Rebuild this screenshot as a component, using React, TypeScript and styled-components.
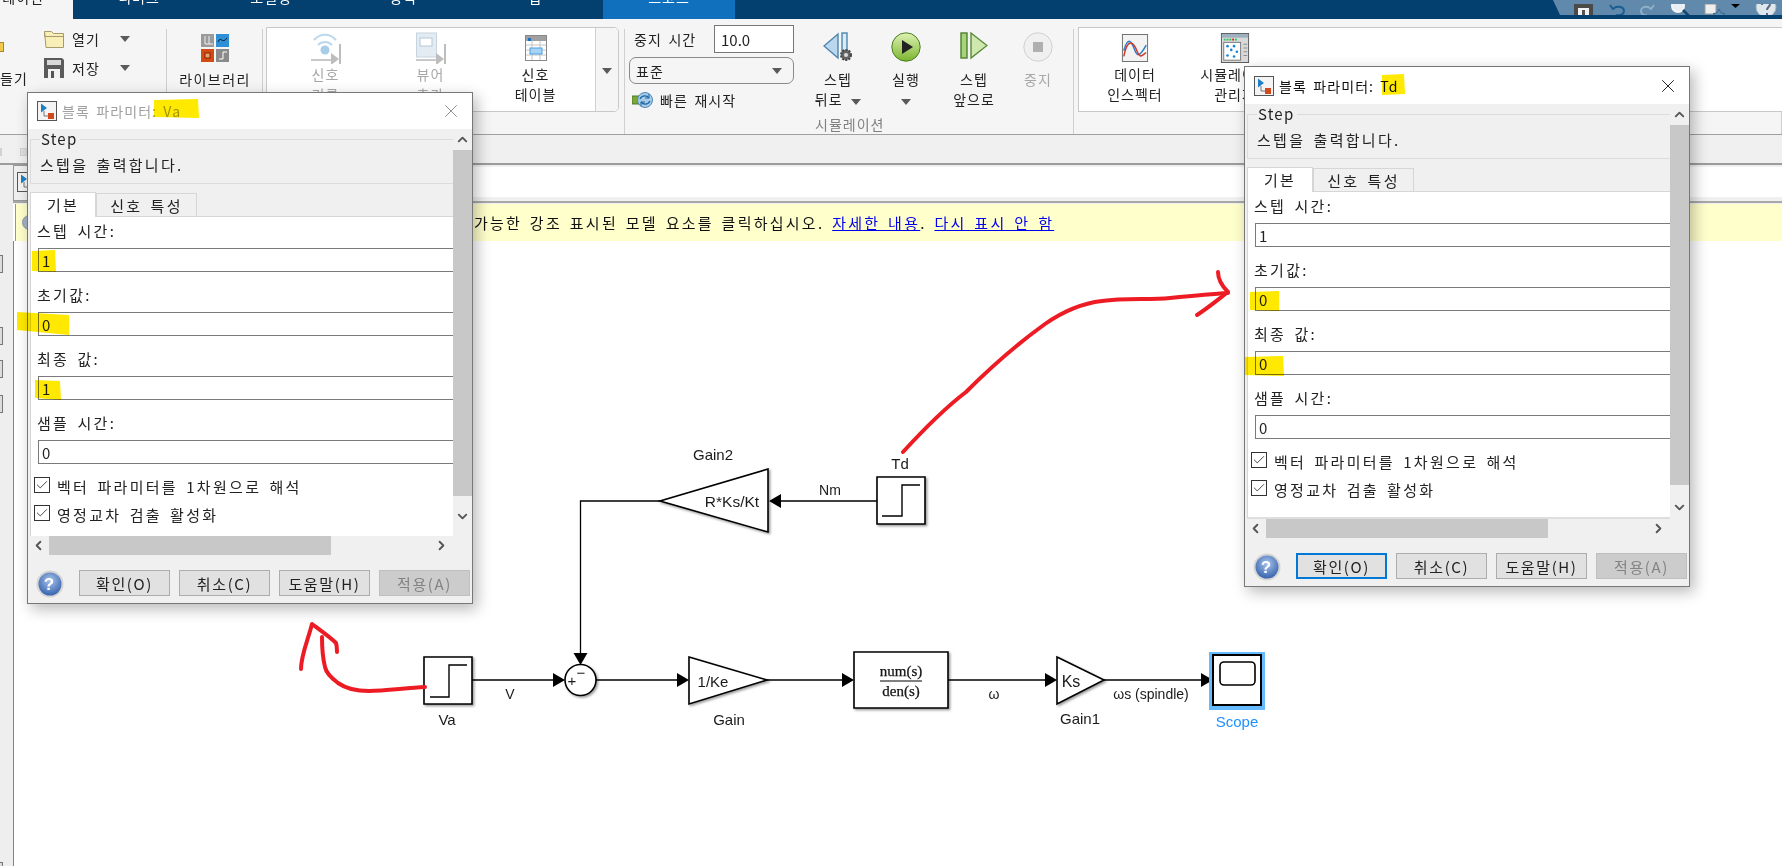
import React from "react";
import styled, { createGlobalStyle } from "styled-components";
import { ChevronUp, ChevronDown, ChevronLeft, ChevronRight, Check, X } from "lucide-react";

const Global = createGlobalStyle`
  html, body { margin: 0; padding: 0; background: #fff; }
  body { font-family: "Noto Sans CJK KR", "Noto Sans", sans-serif; color: #222; overflow: hidden; }
  * { box-sizing: border-box; }
`;

const Page = styled.div`
  position: relative;
  width: 1782px;
  height: 866px;
  overflow: hidden;
  display: flex;
  flex-direction: column;
`;

/* ---------- tab bar ---------- */
const TabBar = styled.div`
  height: 19px;
  flex: none;
  display: flex;
  background: #03406f;
  overflow: hidden;
`;
const Tab = styled.div<{ $w: number; $kind?: "home" | "active" }>`
  width: ${(p) => p.$w}px;
  height: 19px;
  text-align: ${(p) => (p.$kind === "home" ? "right" : "center")};
  padding-right: ${(p) => (p.$kind === "home" ? 29 : 0)}px;
  font-size: 14px;
  letter-spacing: 1px;
  line-height: 14px;
  color: ${(p) => (p.$kind === "home" ? "#222" : "#fff")};
  background: ${(p) => (p.$kind === "home" ? "#f5f5f5" : p.$kind === "active" ? "#1070bd" : "transparent")};
  white-space: nowrap;
  overflow: hidden;
  & > span { display: block; margin-top: -10px; }
`;
const TabGap = styled.div`
  width: 2px;
`;
const QuickBar = styled.div`
  margin-left: auto;
  width: 229px;
  height: 15px;
  background: #6189ab;
  clip-path: polygon(0 0, 100% 0, 100% 100%, 7px 100%);
`;

/* ---------- ribbon ---------- */
const Ribbon = styled.div`
  height: 116px;
  flex: none;
  display: flex;
  background: #f5f5f5;
  border-bottom: 1px solid #a0a0a0;
`;
const Section = styled.div<{ $w?: number }>`
  ${(p) => (p.$w ? `width: ${p.$w}px; flex: none;` : "flex: 1; min-width: 0;")}
  display: flex;
  background: linear-gradient(#cfcfcf, #cfcfcf) no-repeat right 0 top 10px / 1px 100%;
  font-size: 14px;
  letter-spacing: 1px;
  word-spacing: 2.5px;
`;
const NewCol = styled.div`
  width: 44px;
  flex: none;
  line-height: 20px;
`;
const NewIcon = styled.div`
  width: 4px;
  height: 10px;
  margin-top: 23px;
  background: #f2c94c;
  border: 1px solid #a8862a;
  border-left: 0;
`;
const NewLabel = styled.div`
  margin-top: 16px;
`;
const FileCol = styled.div`
  padding-top: 5px;
`;
const FileRow = styled.div<{ $top?: number }>`
  height: 29px;
  margin-top: ${(p) => p.$top ?? 0}px;
  display: flex;
  align-items: center;
`;
const FileLabel = styled.span`
  width: 48px;
  margin-left: 8px;
`;
const Caret = styled.span<{ $left?: number }>`
  display: inline-block;
  width: 0;
  height: 0;
  margin-left: ${(p) => p.$left ?? 0}px;
  border-left: 5px solid transparent;
  border-right: 5px solid transparent;
  border-top: 6px solid #5a5a5a;
`;
const LibraryButton = styled.div`
  width: 96px;
  display: flex;
  flex-direction: column;
  align-items: center;
  padding-top: 13px;
  line-height: 19px;
`;
const IconSlot = styled.div`
  height: 32px;
  display: flex;
  align-items: center;
  justify-content: center;
`;
const LibraryLabel = styled.div`
  margin-top: 6px;
  letter-spacing: 1.4px;
  white-space: nowrap;
`;
const Panel = styled.div<{ $w?: number; $left: number; $pad: number; $radius?: boolean }>`
  margin: 8px 0 0 ${(p) => p.$left}px;
  height: 85px;
  ${(p) => (p.$w ? `width: ${p.$w}px;` : "flex: 1;")}
  display: flex;
  background: #fff;
  padding-left: ${(p) => p.$pad}px;
  border: 1px solid #c8c8c8;
  ${(p) => (p.$radius ? "border-radius: 0 5px 5px 0;" : "border-right: 0;")}
  overflow: hidden;
`;
const BigButton = styled.div<{ $w: number; $off?: boolean }>`
  width: ${(p) => p.$w}px;
  flex: none;
  padding-top: 4px;
  text-align: center;
  line-height: 20px;
  color: ${(p) => (p.$off ? "#a8a8a8" : "#222")};
  white-space: nowrap;
`;
const PanelMenu = styled.div`
  width: 24px;
  margin-left: 7px;
  border-left: 1px solid #d0d0d0;
  display: flex;
  align-items: center;
  justify-content: center;
  background: #f5f5f5;
  padding-top: 2px;
`;
const StopCol = styled.div`
  width: 165px;
  margin-left: 4px;
  padding-top: 6px;
  flex: none;
`;
const StopRow = styled.div`
  height: 28px;
  display: flex;
  align-items: center;
`;
const StopLabel = styled.span`
  width: 80px;
  margin-left: 5px;
  white-space: nowrap;
`;
const StopInput = styled.div`
  width: 80px;
  height: 28px;
  border: 1px solid #777;
  background: #fff;
  padding-left: 6px;
  font-size: 15px;
  line-height: 28px;
  letter-spacing: 0;
`;
const ModeSelect = styled.div`
  height: 27px;
  margin-top: 4px;
  border: 1px solid #8a8a8a;
  border-radius: 7px;
  display: flex;
  align-items: center;
  justify-content: space-between;
  padding: 0 11px 0 6px;
`;
const RestartRow = styled.div`
  margin-top: 8px;
  height: 16px;
  display: flex;
  align-items: center;
  gap: 6px;
  padding-left: 3px;
  white-space: nowrap;
`;
const SimGroup = styled.div`
  margin-left: 10px;
  width: 268px;
`;
const SimButtons = styled.div`
  display: flex;
  height: 95px;
`;
const SimButton = styled.div<{ $off?: boolean; $w: number }>`
  width: ${(p) => p.$w}px;
  padding-top: 13px;
  text-align: center;
  line-height: 20px;
  color: ${(p) => (p.$off ? "#a8a8a8" : "#222")};
  white-space: nowrap;
`;
const SimIconSlot = styled.div`
  height: 37px;
  display: flex;
  justify-content: center;
  align-items: flex-start;
`;
const SimCaption = styled.div`
  margin-left: 11px;
  height: 20px;
  line-height: 20px;
  color: #808080;
`;

/* ---------- toolbar & address ---------- */
const Toolbar = styled.div`
  height: 30px;
  flex: none;
  background: #f0f0f0;
  border-bottom: 2px solid #9c9c9c;
  display: flex;
  gap: 18px;
  padding-top: 13px;
`;
const ToolStub = styled.div<{ $w: number }>`
  width: ${(p) => p.$w}px;
  height: 8px;
  background: #dedede;
  border: 1px solid #d2d2d2;
`;
const Lower = styled.div`
  flex: 1;
  display: flex;
  min-height: 0;
`;
const Sidebar = styled.div`
  width: 13px;
  flex: none;
  background: #eeeeee;
  display: flex;
  flex-direction: column;
`;
const SideTool = styled.div<{ $gap: number }>`
  width: 3px;
  height: 18px;
  flex: none;
  margin-top: ${(p) => p.$gap}px;
  background: #dcdcdc;
  border: 1px solid #777;
  border-left: 0;
`;
const Workspace = styled.div`
  flex: 1;
  display: flex;
  flex-direction: column;
  min-width: 0;
`;
const AddressRow = styled.div`
  height: 36px;
  flex: none;
  display: flex;
  background: #f0f0f0;
  padding-bottom: 4px;
`;
const AddressFrame = styled.div`
  width: 15px;
  border: 1px solid #999;
  border-right: 0;
  padding: 6px 0 0 3px;
  margin-bottom: -4px;
  background: #f0f0f0;
`;
const AddressField = styled.div`
  flex: 1;
  margin-top: 2px;
  background: #fff;
`;
const Rule = styled.div`
  height: 3px;
  flex: none;
  background: #f0f0f0;
  border-top: 2px solid #a8a8a8;
`;
const InfoBar = styled.div`
  height: 37px;
  flex: none;
  margin-left: 2px;
  background: #ffffcc;
  border-left: 1px solid #9a9a80;
  display: flex;
  align-items: center;
  padding-left: 6px;
  font-size: 15px;
  letter-spacing: 2.25px;
  word-spacing: 2.2px;
  white-space: nowrap;
  color: #111;
`;
const InfoDot = styled.span`
  width: 15px;
  height: 15px;
  border-radius: 50%;
  background: #a6b3c2;
  border: 1px solid #8a97a8;
  flex: none;
`;
const InfoText = styled.span`
  margin-left: 397px;
`;
const InfoLink = styled.a`
  color: #0000ee;
  text-decoration: underline;
`;
const Canvas = styled.div`
  flex: 1;
  min-height: 0;
  background: #fff;
  border-left: 1px solid #85828c;
`;
const DiagramSvg = styled.svg`
  display: block;
`;
const Shape = styled.path`
  fill: #fff;
  stroke: #000;
  stroke-width: 1.6;
`;
const Wire = styled.path`
  fill: none;
  stroke: #000;
  stroke-width: 1.3;
`;
const Glyph = styled.path`
  fill: none;
  stroke: #000;
  stroke-width: 1.4;
`;
const Head = styled.path`
  fill: #000;
`;
const Label = styled.text<{ $size?: number; $color?: string; $serif?: boolean }>`
  font-family: ${(p) => (p.$serif ? '"Liberation Serif", serif' : '"Liberation Sans", Arial, sans-serif')};
  font-size: ${(p) => p.$size ?? 15}px;
  fill: ${(p) => p.$color ?? "#1a1a1a"};
  text-anchor: middle;
  dominant-baseline: central;
  ${(p) => (p.$serif ? "stroke: #000; stroke-width: .25;" : "")}
`;

/* ---------- dialog ---------- */
const Window = styled.div<{ $left: number; $top: number; $h: number }>`
  position: absolute;
  left: ${(p) => p.$left}px;
  top: ${(p) => p.$top}px;
  width: 446px;
  height: ${(p) => p.$h}px;
  display: flex;
  flex-direction: column;
  background: #f0f0f0;
  border: 1px solid #777;
  box-shadow: 4px 5px 14px rgba(0, 0, 0, 0.28);
  font-size: 15px;
  letter-spacing: 2.3px;
  word-spacing: 2.6px;
`;
const TitleBar = styled.div<{ $h: number; $active: boolean }>`
  height: ${(p) => p.$h}px;
  flex: none;
  background: #fff;
  display: flex;
  align-items: center;
  padding: 0 10px 0 9px;
  font-size: 14px;
  letter-spacing: 1.1px;
  word-spacing: 2px;
  color: ${(p) => (p.$active ? "#111" : "#a0a0a0")};
`;
const TitleText = styled.span`
  margin-left: 5px;
  flex: 1;
`;
const Main = styled.div<{ $h: number }>`
  height: ${(p) => p.$h}px;
  flex: none;
  display: flex;
`;
const Pane = styled.div`
  flex: 1;
  min-width: 0;
  display: flex;
  flex-direction: column;
  padding-left: 2px;
`;
const Group = styled.fieldset`
  margin: 0;
  padding: 4px 0 0 9px;
  height: 55px;
  flex: none;
  border: 1px solid #dcdcdc;
  border-right: 0;
  line-height: 24px;
`;
const Legend = styled.legend`
  padding: 0 3px 0 1px;
  margin-left: 0;
  height: 20px;
  line-height: 20px;
  letter-spacing: 1.2px;
`;
const TabStrip = styled.div`
  display: flex;
  align-items: flex-end;
  height: 24px;
  margin-top: 9px;
  flex: none;
  border-bottom: 1px solid #d6d6d6;
`;
const DialogTab = styled.div<{ $w: number; $on?: boolean }>`
  width: ${(p) => p.$w}px;
  height: ${(p) => (p.$on ? 25 : 23)}px;
  margin-bottom: ${(p) => (p.$on ? -1 : 0)}px;
  background: ${(p) => (p.$on ? "#fff" : "#f0f0f0")};
  border: 1px solid #d6d6d6;
  border-bottom: 0;
  text-align: center;
  line-height: 23px;
  white-space: nowrap;
`;
const TabBody = styled.div<{ $closed: boolean }>`
  flex: 1;
  background: #fff;
  border-left: 1px solid #d6d6d6;
  ${(p) => (p.$closed ? "border-bottom: 2px solid #dedede;" : "")}
  padding-left: 7px;
`;
const Field = styled.div`
  height: 64px;
`;
const FieldLabel = styled.div`
  height: 31px;
  line-height: 27px;
  margin-left: -1px;
  white-space: nowrap;
`;
const FieldInput = styled.input`
  display: block;
  width: 100%;
  height: 24px;
  border: 1px solid #7a7a7a;
  border-right: 0;
  background: #fff;
  padding: 0 0 0 3px;
  margin: 0;
  outline: none;
  font: inherit;
  color: #222;
`;
const CheckRow = styled.div<{ $first?: boolean }>`
  height: 28px;
  margin-top: ${(p) => (p.$first ? 4 : 0)}px;
  margin-left: -4px;
  display: flex;
  align-items: flex-start;
  gap: 7px;
  line-height: 19px;
  white-space: nowrap;
`;
const CheckBox = styled.span`
  width: 16px;
  height: 16px;
  flex: none;
  border: 1px solid #333;
  display: flex;
  align-items: center;
  justify-content: center;
  color: #222;
`;
const VScroll = styled.div`
  width: 19px;
  flex: none;
  display: flex;
  flex-direction: column;
  align-items: center;
  color: #555;
`;
const ScrollCell = styled.div<{ $size: number }>`
  width: ${(p) => p.$size}px;
  height: ${(p) => p.$size}px;
  flex: none;
  display: flex;
  align-items: center;
  justify-content: center;
`;
const VThumb = styled.div<{ $h: number }>`
  width: 19px;
  height: ${(p) => p.$h}px;
  flex: none;
  background: #c8c8c8;
`;
const Filler = styled.div`
  flex: 1;
`;
const HScroll = styled.div`
  height: 19px;
  flex: none;
  display: flex;
  align-items: center;
  padding-right: 20px;
  color: #555;
`;
const HThumb = styled.div`
  width: 282px;
  height: 19px;
  background: #c8c8c8;
`;
const Footer = styled.div`
  flex: 1;
  display: flex;
  gap: 9px;
  padding: 15px 0 0 8px;
`;
const HelpSlot = styled.div`
  width: 28px;
  height: 28px;
  margin-right: 6px;
`;
const HelpMark = styled.text`
  font-family: "Liberation Sans", sans-serif;
  font-weight: 700;
  font-size: 17px;
  fill: #fff;
  text-anchor: middle;
`;
const DialogButton = styled.div<{ $state?: "default" | "off" }>`
  width: 91px;
  height: 26px;
  background: ${(p) => (p.$state === "off" ? "#cccccc" : "#e1e1e1")};
  border: ${(p) => (p.$state === "default" ? "2px solid #0078d7" : p.$state === "off" ? "1px solid #bfbfbf" : "1px solid #adadad")};
  color: ${(p) => (p.$state === "off" ? "#838383" : "#222")};
  display: flex;
  align-items: center;
  justify-content: center;
  font-size: 15px;
  letter-spacing: 1.6px;
  white-space: nowrap;
`;

/* ---------- annotations ---------- */
const Overlay = styled.svg`
  position: absolute;
  left: 0;
  top: 0;
  pointer-events: none;
`;
const Marker = styled.path`
  fill: #ffe900;
  mix-blend-mode: multiply;
`;
const Pen = styled.path`
  fill: none;
  stroke: #ed1c24;
  stroke-width: 4;
  stroke-linecap: round;
  stroke-linejoin: round;
`;

/* ---------- icons ---------- */
const BlockIcon = () => (
  <svg width="20" height="20" viewBox="0 0 20 20">
    <rect x=".5" y=".5" width="19" height="19" fill="#f4f4f4" stroke="#555" />
    <path d="M4 2.5v9l6-4.5z" fill="#1f7fc4" />
    <rect x="11" y="12" width="6" height="6" fill="#d2491c" />
    <path d="M7 10v5h4" fill="none" stroke="#777" />
  </svg>
);
const FolderIcon = () => (
  <svg width="20" height="19" viewBox="0 0 20 19">
    <path d="M.5 2.5h7l2 2h10v14H2z" fill="#f7eeb8" stroke="#a89a6a" />
    <path d="M.5 2.5v5h19" fill="none" stroke="#a89a6a" />
  </svg>
);
const SaveIcon = () => (
  <svg width="20" height="20" viewBox="0 0 20 20">
    <path d="M0 0h18l2 2v18H0z" fill="#5b5b5b" />
    <rect x="3" y="2" width="14" height="5" fill="#d8d8d8" />
    <rect x="4" y="11" width="12" height="9" fill="#f2f2f2" />
    <rect x="7" y="13" width="3" height="7" fill="#555" />
  </svg>
);
const PrintIcon = () => (
  <svg width="14" height="20" viewBox="0 0 14 20">
    <rect x=".5" y=".5" width="13" height="19" fill="#b4bec8" stroke="#8d99a5" />
  </svg>
);
const LibraryIcon = () => (
  <svg width="28" height="30" viewBox="0 0 28 30">
    <rect x="0" y="1" width="13" height="13" fill="#9a9a9a" />
    <path d="M4 11V3M8 11V3M4 11h8" stroke="#eee" fill="none" />
    <rect x="15" y="1" width="13" height="13" fill="#2d8fd5" />
    <path d="M17 9c3-7 4 3 9-4" stroke="#123" fill="none" />
    <rect x="0" y="16" width="13" height="13" fill="#d34a14" />
    <rect x="4" y="20" width="5" height="5" fill="#f0a070" stroke="#802000" />
    <rect x="15" y="16" width="13" height="13" fill="#8a8a8a" />
    <path d="M18 26h4v-7h4" stroke="#fff" fill="none" />
  </svg>
);
const RecordIcon = () => (
  <svg width="30" height="32" viewBox="0 0 30 32">
    <g fill="none" stroke="#bcd8ec" strokeWidth="2">
      <path d="M3 8c6-7 16-7 22 0" />
      <path d="M7 13c4-4 10-4 14 0" />
    </g>
    <circle cx="14" cy="18" r="4.5" fill="#a8cde8" />
    <path d="M0 28h24" stroke="#c9c9c9" strokeWidth="2" />
    <path d="M20 21l8 6-8 6z" fill="#bdbdbd" />
    <path d="M29 12v20" stroke="#bdbdbd" strokeWidth="2" />
  </svg>
);
const ViewerIcon = () => (
  <svg width="30" height="32" viewBox="0 0 30 32">
    <rect x=".5" y="1" width="20" height="24" fill="#e4ecf3" stroke="#c6d4e0" />
    <rect x="4" y="6" width="12" height="8" fill="#fff" stroke="#b5c8da" />
    <path d="M0 28h24" stroke="#c9c9c9" strokeWidth="2" />
    <path d="M20 21l8 6-8 6z" fill="#bdbdbd" />
    <path d="M29 12v20" stroke="#bdbdbd" strokeWidth="2" />
  </svg>
);
const TableIcon = () => (
  <svg width="22" height="26" viewBox="0 0 22 26">
    <rect x=".5" y=".5" width="21" height="25" fill="#fff" stroke="#888" />
    <rect x="1" y="1" width="20" height="5" fill="#a0a0a0" />
    <rect x="3" y="3" width="3" height="3" fill="#1b6fc0" />
    <path d="M1 10h20M1 15h20M1 20h20M7 6v19M15 6v19" stroke="#c4c4c4" />
    <rect x="5" y="13" width="12" height="6" fill="#a7d4f5" stroke="#4a9fe0" />
  </svg>
);
const RestartIcon = () => (
  <svg width="22" height="18" viewBox="0 0 22 18">
    <rect x="0" y="5" width="7" height="8" fill="#7aa83a" stroke="#4e7a1e" />
    <circle cx="13" cy="9" r="7.5" fill="#a8cbe8" stroke="#4f88bb" />
    <path d="M8 8c2-4 7-4 9-1M18 10c-2 4-7 4-9 1" fill="none" stroke="#1e6aa8" strokeWidth="1.4" />
    <path d="M17 3v4h-4M9 15v-4h4" fill="none" stroke="#1e6aa8" />
  </svg>
);
const StepBackIcon = () => (
  <svg width="30" height="30" viewBox="0 0 30 30">
    <path d="M1 14L15 2v24z" fill="#b9d8ef" stroke="#4f86ad" strokeWidth="1.4" />
    <rect x="19" y="1" width="5" height="19" fill="#d9ecf9" stroke="#4f86ad" strokeWidth="1.4" />
    <circle cx="23" cy="23" r="5" fill="#666" stroke="#444" strokeDasharray="2 1.2" strokeWidth="2" />
    <circle cx="23" cy="23" r="2" fill="#ddd" />
  </svg>
);
const RunIcon = () => (
  <svg width="30" height="30" viewBox="0 0 30 30">
    <defs>
      <linearGradient id="runFill" x1="0" y1="0" x2="0" y2="1">
        <stop offset="0" stopColor="#dff3b4" />
        <stop offset="1" stopColor="#7ab52e" />
      </linearGradient>
    </defs>
    <circle cx="15" cy="15" r="14.2" fill="url(#runFill)" stroke="#4b7d24" />
    <path d="M11 8l11 7-11 7z" fill="#222" />
  </svg>
);
const StepForwardIcon = () => (
  <svg width="28" height="28" viewBox="0 0 28 28">
    <rect x="1" y="1" width="6" height="25" fill="#a7d37a" stroke="#4f8030" strokeWidth="1.4" />
    <path d="M11 1l16 12.5L11 26z" fill="#cfe8ae" stroke="#5b8a3a" strokeWidth="1.4" />
  </svg>
);
const StopIcon = () => (
  <svg width="30" height="30" viewBox="0 0 30 30">
    <circle cx="15" cy="15" r="14.2" fill="#f0f0f0" stroke="#d0d0d0" />
    <rect x="10" y="10" width="10" height="10" fill="#b0b0b0" />
  </svg>
);
const InspectorIcon = () => (
  <svg width="28" height="28" viewBox="0 0 28 30">
    <rect x=".5" y=".5" width="27" height="29" fill="#f3f3f3" stroke="#6a6a6a" />
    <path d="M2 18c5-18 9-8 12 0s7 3 12-6" fill="none" stroke="#2e7fc8" strokeWidth="1.6" />
    <path d="M2 24c4-20 10-16 14-6s6 4 10 2" fill="none" stroke="#cc3a2c" strokeWidth="1.6" />
  </svg>
);
const ManagerIcon = () => (
  <svg width="30" height="30" viewBox="0 0 30 32">
    <rect x=".5" y=".5" width="29" height="31" fill="#d9d9d9" stroke="#555" />
    <rect x="1" y="1" width="28" height="4" fill="#9fb0bf" />
    <path d="M3 7h2M6 7h2" stroke="#22c55e" strokeWidth="2" />
    <path d="M9 7h2" stroke="#22c55e" strokeWidth="2" />
    <path d="M12 7h2" stroke="#e11d1d" strokeWidth="2" />
    <path d="M15 7h2" stroke="#22c55e" strokeWidth="2" />
    <rect x="3" y="10" width="18" height="19" fill="#fff" stroke="#777" />
    <g fill="#1b86d8">
      <circle cx="7" cy="14" r="1.4" /><circle cx="14" cy="14" r="1.4" /><circle cx="11" cy="18" r="1.4" />
      <circle cx="17" cy="20" r="1.4" /><circle cx="7" cy="24" r="1.4" /><circle cx="14" cy="25" r="1.4" />
    </g>
    <path d="M24 12h4M24 16h4M24 20h4M24 24h4" stroke="#888" />
  </svg>
);
const QuickIcons = () => (
  <svg width="229" height="15" viewBox="1553 0 229 15">
    <path d="M1574 0h19v12h-19z" fill="#4a4a4a" />
    <rect x="1578" y="4" width="11" height="8" fill="#f2f2f2" />
    <rect x="1582" y="6" width="3" height="6" fill="#555" />
    <path d="M1610 1l3 4 3-2c5-1 8 1 8 4s-3 5-8 4" fill="none" stroke="#1a5d92" strokeWidth="2" />
    <path d="M1654 1l-3 4-3-2c-4-1-7 1-7 4s3 5 6 4" fill="none" stroke="#8fb0ca" strokeWidth="2" />
    <circle cx="1678" cy="2" r="6" fill="#e8eef3" stroke="#f4f4f4" strokeWidth="2" />
    <path d="M1683 6l7 7" stroke="#14476f" strokeWidth="2.6" />
    <rect x="1705" y="0" width="11" height="10" fill="#eee" stroke="#999" />
    <path d="M1719 5l2 4 4 .5-3 2.6 1 4-4-2-4 2 1-4-3-2.6 4-.5z" fill="#5f8fb3" stroke="#3b6a90" />
    <path d="M1731 0h9l-4.500 4z" fill="#000" />
    <circle cx="1766" cy="3" r="10" fill="#dfe6ec" stroke="#9fb3c4" />
    <path d="M1762 1c0-6 8-6 8-1 0 3-3 3-3 6M1767 9v2" fill="none" stroke="#5a6c80" strokeWidth="2" />
  </svg>
);
const HelpIcon = ({ id }: { id: string }) => (
  <svg width="28" height="28" viewBox="0 0 28 28">
    <defs>
      <radialGradient id={id} cx=".5" cy=".35" r=".7">
        <stop offset="0" stopColor="#a8c4ec" />
        <stop offset="1" stopColor="#2f5ca8" />
      </radialGradient>
    </defs>
    <circle cx="14" cy="14" r="13.5" fill="#d4d4d4" />
    <circle cx="14" cy="14" r="11.5" fill={`url(#${id})`} />
    <HelpMark x="14" y="20">?</HelpMark>
  </svg>
);

/* ---------- composite pieces ---------- */
const fields = [
  { label: "스텝 시간:" },
  { label: "초기값:" },
  { label: "최종 값:" },
  { label: "샘플 시간:" },
];

type DialogProps = {
  left: number;
  top: number;
  height: number;
  titleH: number;
  mainH: number;
  thumb: number;
  offset: number;
  active: boolean;
  name: string;
  values: string[];
};

const Dialog = ({ left, top, height, titleH, mainH, thumb, offset, active, name, values }: DialogProps) => (
  <Window $left={left} $top={top} $h={height}>
    <TitleBar $h={titleH} $active={active}>
      <BlockIcon />
      <TitleText>블록 파라미터: {name}</TitleText>
      <X size={22} strokeWidth={1} color={active ? "#111" : "#888"} />
    </TitleBar>
    <Main $h={mainH}>
      <Pane>
        <Group>
          <Legend>Step</Legend>
          스텝을 출력합니다.
        </Group>
        <TabStrip>
          <DialogTab $w={66} $on>기본</DialogTab>
          <DialogTab $w={101}>신호 특성</DialogTab>
        </TabStrip>
        <TabBody $closed={active}>
          {fields.map((f, i) => (
            <Field key={f.label}>
              <FieldLabel>{f.label}</FieldLabel>
              <FieldInput readOnly value={values[i]} />
            </Field>
          ))}
          <CheckRow $first>
            <CheckBox><Check size={14} strokeWidth={1.4} /></CheckBox>
            벡터 파라미터를 1차원으로 해석
          </CheckRow>
          <CheckRow>
            <CheckBox><Check size={14} strokeWidth={1.4} /></CheckBox>
            영정교차 검출 활성화
          </CheckRow>
        </TabBody>
      </Pane>
      <VScroll>
        <ScrollCell $size={21}><ChevronUp size={15} strokeWidth={3} /></ScrollCell>
        <VThumb $h={thumb} />
        <Filler />
        <ScrollCell $size={offset}><ChevronDown size={15} strokeWidth={3} /></ScrollCell>
      </VScroll>
    </Main>
    <HScroll>
      <ScrollCell $size={21}><ChevronLeft size={15} strokeWidth={3} /></ScrollCell>
      <HThumb />
      <Filler />
      <ScrollCell $size={21}><ChevronRight size={15} strokeWidth={3} /></ScrollCell>
    </HScroll>
    <Footer>
      <HelpSlot><HelpIcon id={`help-${name}`} /></HelpSlot>
      <DialogButton $state={active ? "default" : undefined}>확인(O)</DialogButton>
      <DialogButton>취소(C)</DialogButton>
      <DialogButton>도움말(H)</DialogButton>
      <DialogButton $state="off">적용(A)</DialogButton>
    </Footer>
  </Window>
);

const arrowRight = (x: number, y: number) => `M${x - 12} ${y - 7}L${x} ${y}L${x - 12} ${y + 7}z`;

const Diagram = () => (
  <DiagramSvg width="1768" height="625" viewBox="14 241 1768 625">
    <defs>
      <filter id="blockShadow" x="-20%" y="-20%" width="150%" height="150%">
        <feDropShadow dx="1.5" dy="1.5" stdDeviation="1" floodColor="#000" floodOpacity="0.4" />
      </filter>
    </defs>

    <Wire d="M472 680H555" />
    <Wire d="M596 680H679" />
    <Wire d="M767 680H844" />
    <Wire d="M948 680H1047" />
    <Wire d="M1104 680H1203" />
    <Wire d="M877 501H779" />
    <Wire d="M660 501H580.500V655" />
    <Head d={arrowRight(565, 680)} />
    <Head d={arrowRight(689, 680)} />
    <Head d={arrowRight(854, 680)} />
    <Head d={arrowRight(1057, 680)} />
    <Head d={arrowRight(1213, 680)} />
    <Head d="M769 501L781 494V508z" />
    <Head d="M573.500 653H587.500L580.500 665z" />

    <g filter="url(#blockShadow)">
      <Shape d="M424 657H472V704H424z" />
      <Shape d="M877 477H925V524H877z" />
      <Shape d="M689 657L767 680L689 704z" />
      <Shape d="M1057 657L1104 680L1057 704z" />
      <Shape d="M768 469L660 501L768 532z" />
      <Shape d="M854 652H948V708H854z" />
      <circle cx="580.500" cy="680" r="15.500" fill="#fff" stroke="#000" strokeWidth="1.6" />
    </g>

    <Glyph d="M430 697H449V665H467" />
    <Glyph d="M882 516H902V485H920" />
    <Label x="572" y="680" $size={15}>+</Label>
    <Label x="581" y="672" $size={15}>−</Label>

    <Label x="447" y="719">Va</Label>
    <Label x="510" y="694" $size={14}>V</Label>
    <Label x="713" y="681">1/Ke</Label>
    <Label x="729" y="719">Gain</Label>
    <Label x="713" y="454">Gain2</Label>
    <Label x="732" y="501" $size={15.500}>R*Ks/Kt</Label>
    <Label x="830" y="490" $size={14}>Nm</Label>
    <Label x="900" y="463">Td</Label>
    <Label x="901" y="671" $size={15} $serif>num(s)</Label>
    <path d="M880 681H922" stroke="#000" strokeWidth="1" />
    <Label x="901" y="691" $size={15} $serif>den(s)</Label>
    <Label x="994" y="694" $size={14}>ω</Label>
    <Label x="1071" y="681" $size={16}>Ks</Label>
    <Label x="1080" y="718">Gain1</Label>
    <Label x="1151" y="694" $size={14}>ωs (spindle)</Label>

    <rect x="1209" y="652" width="56" height="58" fill="#66bbff" />
    <rect x="1213" y="655" width="48" height="50" fill="#fff" stroke="#000" strokeWidth="2" />
    <rect x="1220" y="662" width="35" height="23" rx="4" fill="#fff" stroke="#000" strokeWidth="1.6" />
    <Label x="1237" y="721" $color="#1e90ff" $size={15}>Scope</Label>
  </DiagramSvg>
);

export default function App() {
  return (
    <>
      <Global />
      <Page>
        <TabBar>
          <Tab $w={73} $kind="home"><span>레이션</span></Tab>
          <Tab $w={132}><span>디버그</span></Tab>
          <Tab $w={132}><span>모델링</span></Tab>
          <Tab $w={132}><span>형식</span></Tab>
          <Tab $w={132}><span>앱</span></Tab>
          <TabGap />
          <Tab $w={132} $kind="active"><span>스코프</span></Tab>
          <QuickBar><QuickIcons /></QuickBar>
        </TabBar>

        <Ribbon>
          <Section $w={167}>
            <NewCol>
              <NewIcon />
              <NewLabel>들기</NewLabel>
            </NewCol>
            <FileCol>
              <FileRow><FolderIcon /><FileLabel>열기</FileLabel><Caret /></FileRow>
              <FileRow><SaveIcon /><FileLabel>저장</FileLabel><Caret /></FileRow>
              <FileRow $top={5}><PrintIcon /></FileRow>
            </FileCol>
          </Section>
          <Section $w={96}>
            <LibraryButton>
              <IconSlot><LibraryIcon /></IconSlot>
              <LibraryLabel>라이브러리</LibraryLabel>
            </LibraryButton>
          </Section>
          <Section $w={362}>
            <Panel $left={3} $w={353} $pad={6} $radius>
              <BigButton $w={105} $off>
                <IconSlot><RecordIcon /></IconSlot>
                신호<br />기록
              </BigButton>
              <BigButton $w={105} $off>
                <IconSlot><ViewerIcon /></IconSlot>
                뷰어<br />추가
              </BigButton>
              <BigButton $w={105}>
                <IconSlot><TableIcon /></IconSlot>
                신호<br />테이블
              </BigButton>
              <PanelMenu><Caret /></PanelMenu>
            </Panel>
          </Section>
          <Section $w={449}>
            <StopCol>
              <StopRow>
                <StopLabel>중지 시간</StopLabel>
                <StopInput>10.0</StopInput>
              </StopRow>
              <ModeSelect>표준<Caret /></ModeSelect>
              <RestartRow><RestartIcon />빠른 재시작</RestartRow>
            </StopCol>
            <SimGroup>
              <SimButtons>
                <SimButton $w={68}>
                  <SimIconSlot><StepBackIcon /></SimIconSlot>
                  스텝<br />뒤로 <Caret $left={2} />
                </SimButton>
                <SimButton $w={68}>
                  <SimIconSlot><RunIcon /></SimIconSlot>
                  실행<br /><Caret />
                </SimButton>
                <SimButton $w={68}>
                  <SimIconSlot><StepForwardIcon /></SimIconSlot>
                  스텝<br />앞으로
                </SimButton>
                <SimButton $w={60} $off>
                  <SimIconSlot><StopIcon /></SimIconSlot>
                  중지
                </SimButton>
              </SimButtons>
              <SimCaption>시뮬레이션</SimCaption>
            </SimGroup>
          </Section>
          <Section>
            <Panel $left={4} $pad={6}>
              <BigButton $w={100}>
                <IconSlot><InspectorIcon /></IconSlot>
                데이터<br />인스펙터
              </BigButton>
              <BigButton $w={100}>
                <IconSlot><ManagerIcon /></IconSlot>
                시뮬레이션<br />관리자
              </BigButton>
            </Panel>
          </Section>
        </Ribbon>

        <Toolbar>
          <ToolStub $w={2} />
          <ToolStub $w={7} />
        </Toolbar>

        <Lower>
          <Sidebar>
            <SideTool $gap={90} />
            <SideTool $gap={54} />
            <SideTool $gap={15} />
            <SideTool $gap={17} />
            <SideTool $gap={449} />
          </Sidebar>
          <Workspace>
            <AddressRow>
              <AddressFrame><BlockIcon /></AddressFrame>
              <AddressField />
            </AddressRow>
            <Rule />
            <InfoBar>
              <InfoDot />
              <InfoText>
                선택 가능한 강조 표시된 모델 요소를 클릭하십시오. <InfoLink>자세한 내용</InfoLink>.{" "}
                <InfoLink>다시 표시 안 함</InfoLink>
              </InfoText>
            </InfoBar>
            <Canvas><Diagram /></Canvas>
          </Workspace>
        </Lower>

        <Dialog left={27} top={92} height={512} titleH={36} mainH={407} thumb={346} offset={40} active={false} name="Va" values={["1", "0", "1", "0"]} />
        <Dialog left={1244} top={66} height={521} titleH={37} mainH={415} thumb={360} offset={44} active name="Td" values={["1", "0", "0", "0"]} />

        <Overlay width="1782" height="866" viewBox="0 0 1782 866">
          <Marker d="M154 100L198 99L199 118L154 117z" />
          <Marker d="M32 251L55 250L56 272L32 271z" />
          <Marker d="M17 312L69 315L69 335L17 330z" />
          <Marker d="M35 380L60 381L61 400L35 398z" />
          <Marker d="M1382 75L1404 74L1405 94L1382 95z" />
          <Marker d="M1250 292L1279 291L1279 311L1250 310z" />
          <Marker d="M1245 357L1283 356L1284 376L1245 375z" />

          <Pen d="M903 452C925 428 945 408 966 392C990 368 1020 342 1045 324C1065 310 1085 303 1102 301C1125 298 1150 300 1170 298C1190 296 1210 294 1228 293" />
          <Pen d="M1218 272C1218 280 1222 286 1228 292C1220 298 1208 308 1197 315" />
          <Pen d="M425 687C405 688 385 691 369 691C355 691 345 688 338 683C330 677 326 672 325 667C322 655 322 645 322 637" />
          <Pen d="M301 669C301 655 308 640 312 624C320 630 330 637 336 643C337 646 337 649 337 652" />
        </Overlay>
      </Page>
    </>
  );
}
